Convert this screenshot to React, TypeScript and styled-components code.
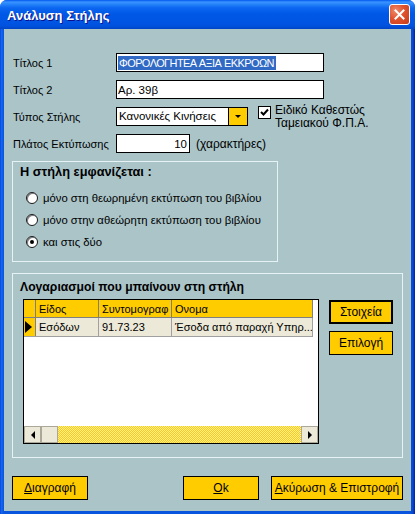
import React from 'react';
import styled, { createGlobalStyle } from 'styled-components';

const GlobalStyle = createGlobalStyle`
  html, body { margin: 0; padding: 0; background: #ffffff; }
  body { font-family: "Liberation Sans", Arial, sans-serif; font-size: 11.5px; color: #000; }
  * { box-sizing: border-box; }
`;

const Window = styled.div`
  width: 415px;
  height: 514px;
  display: flex;
  flex-direction: column;
  background: linear-gradient(to right, #0831D9 0, #166AEE 1px, #0A5BE4 3px, #0A55DE 4px, #0A55DE 410px, #0845D0 413px, #001EA0 415px);
  border-radius: 7px 7px 0 0;
  overflow: hidden;
`;

const TitleBar = styled.div`
  height: 29px;
  flex: none;
  display: flex;
  align-items: center;
  justify-content: space-between;
  padding: 2px 5px 0 7px;
  background: linear-gradient(180deg, #0058EE 0, #3A93FF 2px, #2886FB 4px, #0B66F0 8px, #0058E6 14px, #0055E3 22px, #0052DE 26px, #0044C4 29px);
`;

const TitleText = styled.span`
  color: #ffffff;
  font-family: "Liberation Sans", Arial, sans-serif;
  font-weight: bold;
  font-size: 13px;
  text-shadow: 1px 1px #0F1089;
`;

const CloseButton = styled.div`
  width: 21px;
  height: 21px;
  margin-top: -2px;
  border: 1px solid #ffffff;
  border-radius: 3px;
  background: radial-gradient(circle at 30% 30%, #EE8A6A 0, #E0532F 45%, #C63A19 100%);
  display: flex;
  align-items: center;
  justify-content: center;
`;

const Body = styled.div`
  flex: 1;
  margin: 0 4px 3px 4px;
  background: #AAC4C8;
  display: flex;
  flex-direction: column;
  padding: 24px 8px 0 8px;
`;

const FormGrid = styled.div`
  display: flex;
  flex-direction: column;
  gap: 8px;
`;

const FormRow = styled.div`
  display: flex;
  align-items: center;
  height: 19px;
`;

const FieldLabel = styled.span`
  flex: none;
  width: 104px;
  padding-left: 1px;
  font-size: 11px;
  white-space: nowrap;
`;

const TextBox = styled.div<{ $w: number; $right?: boolean }>`
  flex: none;
  width: ${(p) => p.$w}px;
  height: 19px;
  background: #ffffff;
  border: 1px solid #000000;
  display: flex;
  align-items: center;
  justify-content: ${(p) => (p.$right ? 'flex-end' : 'flex-start')};
  padding: ${(p) => (p.$right ? '0 2px 0 1px' : '0 1px 0 1px')};
  white-space: nowrap;
  overflow: hidden;
`;

const Selected = styled.span`
  background: #316AC5;
  color: #ffffff;
  font-size: 11px;
  letter-spacing: -0.6px;
  word-spacing: 1px;
  line-height: 14px;
  padding: 0 2px 0 1px;
`;

const Combo = styled.div`
  flex: none;
  width: 132px;
  height: 19px;
  border: 1px solid #000000;
  background: #ffffff;
  display: flex;
`;

const ComboText = styled.span`
  flex: 1;
  padding-left: 2px;
  line-height: 17px;
  white-space: nowrap;
  overflow: hidden;
`;

const ComboArrow = styled.div`
  width: 19px;
  border-left: 1px solid #000000;
  background: #FFCC00;
  display: flex;
  align-items: center;
  justify-content: center;
`;

const DownTri = styled.div`
  width: 0;
  height: 0;
  border-left: 3px solid transparent;
  border-right: 3px solid transparent;
  border-top: 3px solid #000000;
`;

const CheckWrap = styled.div`
  align-self: flex-start;
  margin: -3px 0 0 10px;
  display: flex;
  align-items: flex-start;
  gap: 4px;
`;

const CheckBox = styled.div`
  width: 13px;
  height: 13px;
  margin-top: 2px;
  background: #ffffff;
  border: 1px solid #000000;
  display: flex;
  align-items: center;
  justify-content: center;
`;

const CheckLabel = styled.span`
  font-size: 12px;
  line-height: 13px;
`;

const Suffix = styled.span`
  margin-left: 6px;
  font-size: 12px;
  white-space: nowrap;
`;

const GroupBox = styled.div<{ $w?: number; $h: number; $mt: number; $pt: number }>`
  width: ${(p) => (p.$w ? `${p.$w}px` : 'auto')};
  height: ${(p) => p.$h}px;
  margin-top: ${(p) => p.$mt}px;
  border: 1px solid #E6F3F5;
  padding: ${(p) => p.$pt}px 0 0 0;
  display: flex;
  flex-direction: column;
`;

const GroupTitle = styled.div<{ $size: number }>`
  font-weight: bold;
  font-size: ${(p) => p.$size}px;
  line-height: 14px;
  padding-left: 7px;
  white-space: nowrap;
`;

const RadioList = styled.div`
  margin-top: 8px;
  padding-left: 13px;
  display: flex;
  flex-direction: column;
`;

const RadioRow = styled.div`
  height: 22px;
  display: flex;
  align-items: center;
  gap: 5px;
  font-size: 11.3px;
  white-space: nowrap;
`;

const RadioCircle = styled.div<{ $on?: boolean }>`
  width: 12px;
  height: 12px;
  border-radius: 50%;
  background: #ffffff;
  border: 1px solid #1A1A1A;
  box-shadow: inset 1px 1px 0 #808080;
  display: flex;
  align-items: center;
  justify-content: center;
  &::after {
    content: '';
    display: ${(p) => (p.$on ? 'block' : 'none')};
    width: 4px;
    height: 4px;
    border-radius: 50%;
    background: #000000;
  }
`;

const AccountsRow = styled.div`
  display: flex;
  margin: 5px 0 0 10px;
  gap: 10px;
`;

const Grid = styled.div`
  width: 296px;
  height: 145px;
  border: 1px solid #000000;
  background: #ffffff;
  display: flex;
  flex-direction: column;
`;

const GridRows = styled.div`
  flex: 1;
`;

const GridLine = styled.div<{ $head?: boolean }>`
  display: flex;
  height: ${(p) => (p.$head ? 17 : 18)}px;
  box-sizing: content-box;
  border-bottom: 1px solid ${(p) => (p.$head ? '#7F7F7F' : '#A0A0A0')};
  width: 289px;
`;

const Cell = styled.div<{ $w: number; $head?: boolean; $ind?: boolean }>`
  flex: none;
  width: ${(p) => p.$w}px;
  border-right: 1px solid ${(p) => (p.$head || p.$ind ? '#7F7F7F' : '#A0A0A0')};
  background: ${(p) => (p.$head || p.$ind ? '#FFCC00' : '#ECE9D8')};
  padding-left: 3px;
  font-size: 11px;
  white-space: nowrap;
  overflow: hidden;
  display: flex;
  align-items: center;
`;

const ScrollBar = styled.div`
  height: 17px;
  display: flex;
`;

const ScrollBtn = styled.div`
  width: 17px;
  height: 17px;
  background: #ECE9D8;
  border: 1px solid #ACA899;
  display: flex;
  align-items: center;
  justify-content: center;
`;

const ScrollTrack = styled.div`
  flex: 1;
  background: repeating-conic-gradient(#FFCC00 0% 25%, #FFEFA8 0% 50%) 0 0 / 2px 2px;
`;

const ArrowTri = styled.div<{ $dir: 'left' | 'right' }>`
  width: 0;
  height: 0;
  border-top: 4px solid transparent;
  border-bottom: 4px solid transparent;
  ${(p) => (p.$dir === 'left' ? 'border-right: 4px solid #000;' : 'border-left: 4px solid #000;')}
`;

const SideButtons = styled.div`
  display: flex;
  flex-direction: column;
  gap: 7px;
  margin-top: 1px;
`;

const Button = styled.div<{ $w: number; $default?: boolean }>`
  width: ${(p) => p.$w}px;
  height: 24px;
  background: #FFCC00;
  border: ${(p) => (p.$default ? '2px' : '1px')} solid #000000;
  display: flex;
  align-items: center;
  justify-content: center;
  font-size: 12px;
  white-space: nowrap;
`;

const Mn = styled.span`
  text-decoration: underline;
`;

const Footer = styled.div`
  display: flex;
  margin-top: 18px;
`;

const Spacer = styled.div`
  flex: 1;
`;

const FooterGap = styled.div`
  width: 12px;
`;

export default function App() {
  return (
    <>
      <GlobalStyle />
      <Window>
        <TitleBar>
          <TitleText>Ανάλυση Στήλης</TitleText>
          <CloseButton>
            <svg width="11" height="11" viewBox="0 0 11 11">
              <path d="M1.5 1.5 L9.5 9.5 M9.5 1.5 L1.5 9.5" stroke="#ffffff" strokeWidth="2" strokeLinecap="square" />
            </svg>
          </CloseButton>
        </TitleBar>
        <Body>
          <FormGrid>
            <FormRow>
              <FieldLabel>Τίτλος 1</FieldLabel>
              <TextBox $w={208}>
                <Selected>ΦΟΡΟΛΟΓΗΤΕΑ ΑΞΙΑ ΕΚΚΡΟΩΝ</Selected>
              </TextBox>
            </FormRow>
            <FormRow>
              <FieldLabel>Τίτλος 2</FieldLabel>
              <TextBox $w={208}>Αρ. 39β</TextBox>
            </FormRow>
            <FormRow>
              <FieldLabel>Τύπος Στήλης</FieldLabel>
              <Combo>
                <ComboText>Κανονικές Κινήσεις</ComboText>
                <ComboArrow>
                  <DownTri />
                </ComboArrow>
              </Combo>
              <CheckWrap>
                <CheckBox>
                  <svg width="9" height="9" viewBox="0 0 9 9">
                    <path d="M1 4 L3.5 6.5 L8 1.5" stroke="#000" strokeWidth="2" fill="none" />
                  </svg>
                </CheckBox>
                <CheckLabel>
                  Ειδικό Καθεστώς
                  <br />
                  Ταμειακού Φ.Π.Α.
                </CheckLabel>
              </CheckWrap>
            </FormRow>
            <FormRow>
              <FieldLabel>Πλάτος Εκτύπωσης</FieldLabel>
              <TextBox $w={74} $right>
                10
              </TextBox>
              <Suffix>(χαρακτήρες)</Suffix>
            </FormRow>
          </FormGrid>

          <GroupBox $w={266} $h={101} $mt={8} $pt={3}>
            <GroupTitle $size={12.8}>Η στήλη εμφανίζεται :</GroupTitle>
            <RadioList>
              <RadioRow>
                <RadioCircle />
                μόνο στη θεωρημένη εκτύπωση του βιβλίου
              </RadioRow>
              <RadioRow>
                <RadioCircle />
                μόνο στην αθεώρητη εκτύπωση του βιβλίου
              </RadioRow>
              <RadioRow>
                <RadioCircle $on />
                και στις δύο
              </RadioRow>
            </RadioList>
          </GroupBox>

          <GroupBox $h={185} $mt={11} $pt={6}>
            <GroupTitle $size={12.2}>Λογαριασμοί που μπαίνουν στη στήλη</GroupTitle>
            <AccountsRow>
              <Grid>
                <GridRows>
                  <GridLine $head>
                    <Cell $w={12} $head />
                    <Cell $w={63} $head>Είδος</Cell>
                    <Cell $w={73} $head>Συντομογραφ</Cell>
                    <Cell $w={141} $head>Ονομα</Cell>
                  </GridLine>
                  <GridLine>
                    <Cell $w={12} $ind>
                      <svg width="7" height="12" viewBox="0 0 7 12" style={{ marginLeft: -2 }}>
                        <polygon points="0,0 7,6 0,12" fill="#000" />
                      </svg>
                    </Cell>
                    <Cell $w={63}>Εσόδων</Cell>
                    <Cell $w={73}>91.73.23</Cell>
                    <Cell $w={141}>Έσοδα από παραχή Υπηρ...</Cell>
                  </GridLine>
                </GridRows>
                <ScrollBar>
                  <ScrollBtn>
                    <ArrowTri $dir="left" />
                  </ScrollBtn>
                  <ScrollBtn />
                  <ScrollTrack />
                  <ScrollBtn>
                    <ArrowTri $dir="right" />
                  </ScrollBtn>
                </ScrollBar>
              </Grid>
              <SideButtons>
                <Button $w={64} $default>
                  Στοιχεία
                </Button>
                <Button $w={64}>Επιλογή</Button>
              </SideButtons>
            </AccountsRow>
          </GroupBox>

          <Footer>
            <Button $w={76}>
              <Mn>Δ</Mn>ιαγραφή
            </Button>
            <Spacer />
            <Button $w={76}>
              <Mn>O</Mn>k
            </Button>
            <FooterGap />
            <Button $w={132}>
              <Mn>Α</Mn>κύρωση &amp; Επιστροφή
            </Button>
          </Footer>
        </Body>
      </Window>
    </>
  );
}
